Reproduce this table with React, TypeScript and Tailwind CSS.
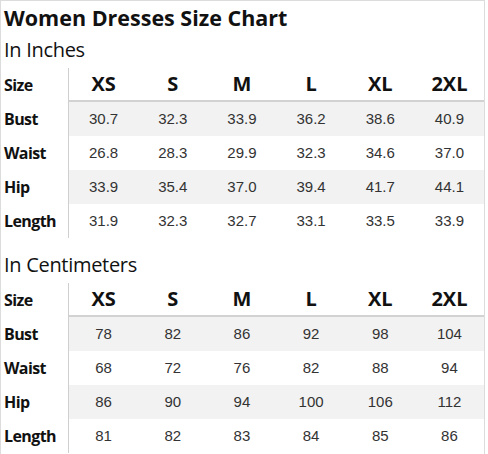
const sizes = ["XS", "S", "M", "L", "XL", "2XL"];

const inches: [string, string[]][] = [
    ["Bust", ["30.7", "32.3", "33.9", "36.2", "38.6", "40.9"]],
    ["Waist", ["26.8", "28.3", "29.9", "32.3", "34.6", "37.0"]],
    ["Hip", ["33.9", "35.4", "37.0", "39.4", "41.7", "44.1"]],
    ["Length", ["31.9", "32.3", "32.7", "33.1", "33.5", "33.9"]],
];

const centimeters: [string, string[]][] = [
    ["Bust", ["78", "82", "86", "92", "98", "104"]],
    ["Waist", ["68", "72", "76", "82", "88", "94"]],
    ["Hip", ["86", "90", "94", "100", "106", "112"]],
    ["Length", ["81", "82", "83", "84", "85", "86"]],
];

function SizeTable(props: { rows: [string, string[]][] }) {
    return (
        <div className="flex flex-col">
            <div className="flex flex-row h-[34px]">
                <div className="w-[68px] shrink-0 border-r border-[#cfcfcf] flex items-center pl-[3px]
                text-[16px] tracking-[-0.6px] font-bold text-[#111]">
                    Size
                </div>
                <div className="flex-1 flex flex-row border-b-2 border-[#d2d2d2]">
                    {sizes.map(s => (
                        <div key={s} className="flex-1 flex items-center justify-center
                        text-[20px] font-bold text-[#111]">
                            {s}
                        </div>
                    ))}
                </div>
            </div>
            {props.rows.map(([label, values], i) => (
                <div key={label} className="flex flex-row h-[34px]">
                    <div className="w-[68px] shrink-0 border-r border-[#cfcfcf] flex items-center pl-[3px]
                    text-[16px] tracking-[-0.6px] font-bold text-[#111]">
                        {label}
                    </div>
                    <div className={`flex-1 flex flex-row ${i % 2 === 0 ? "bg-[#f2f2f2]" : "bg-white"}`}>
                        {values.map((v, j) => (
                            <div key={j} className="flex-1 flex items-center justify-center
                            text-[15px] text-[#333] font-['Liberation_Sans',Arial,sans-serif]">
                                {v}
                            </div>
                        ))}
                    </div>
                </div>
            ))}
        </div>
    );
}

export default function App() {
    return (
        <div className="w-[488px] h-[454px] bg-white overflow-hidden">
            <div className="w-[485px] h-[454px] border-l border-t border-r border-[#dcdcdc]
            font-['Open_Sans','Noto_Sans',sans-serif]">
                <div className="h-[35px] flex items-end pl-[3px] pb-[8px]">
                    <h1 className="text-[21.5px] leading-none font-bold text-[#111]">
                        Women Dresses Size Chart
                    </h1>
                </div>
                <div className="h-[32px] flex items-end pl-[3px] pb-[8px]">
                    <h2 className="text-[20px] leading-none text-[#111] tracking-[-0.3px]">In Inches</h2>
                </div>
                <SizeTable rows={inches}/>
                <div className="h-[45px] flex items-end pl-[3px] pb-[8px]">
                    <h2 className="text-[20px] leading-none text-[#111] tracking-[-0.3px]">In Centimeters</h2>
                </div>
                <SizeTable rows={centimeters}/>
            </div>
        </div>
    );
}
